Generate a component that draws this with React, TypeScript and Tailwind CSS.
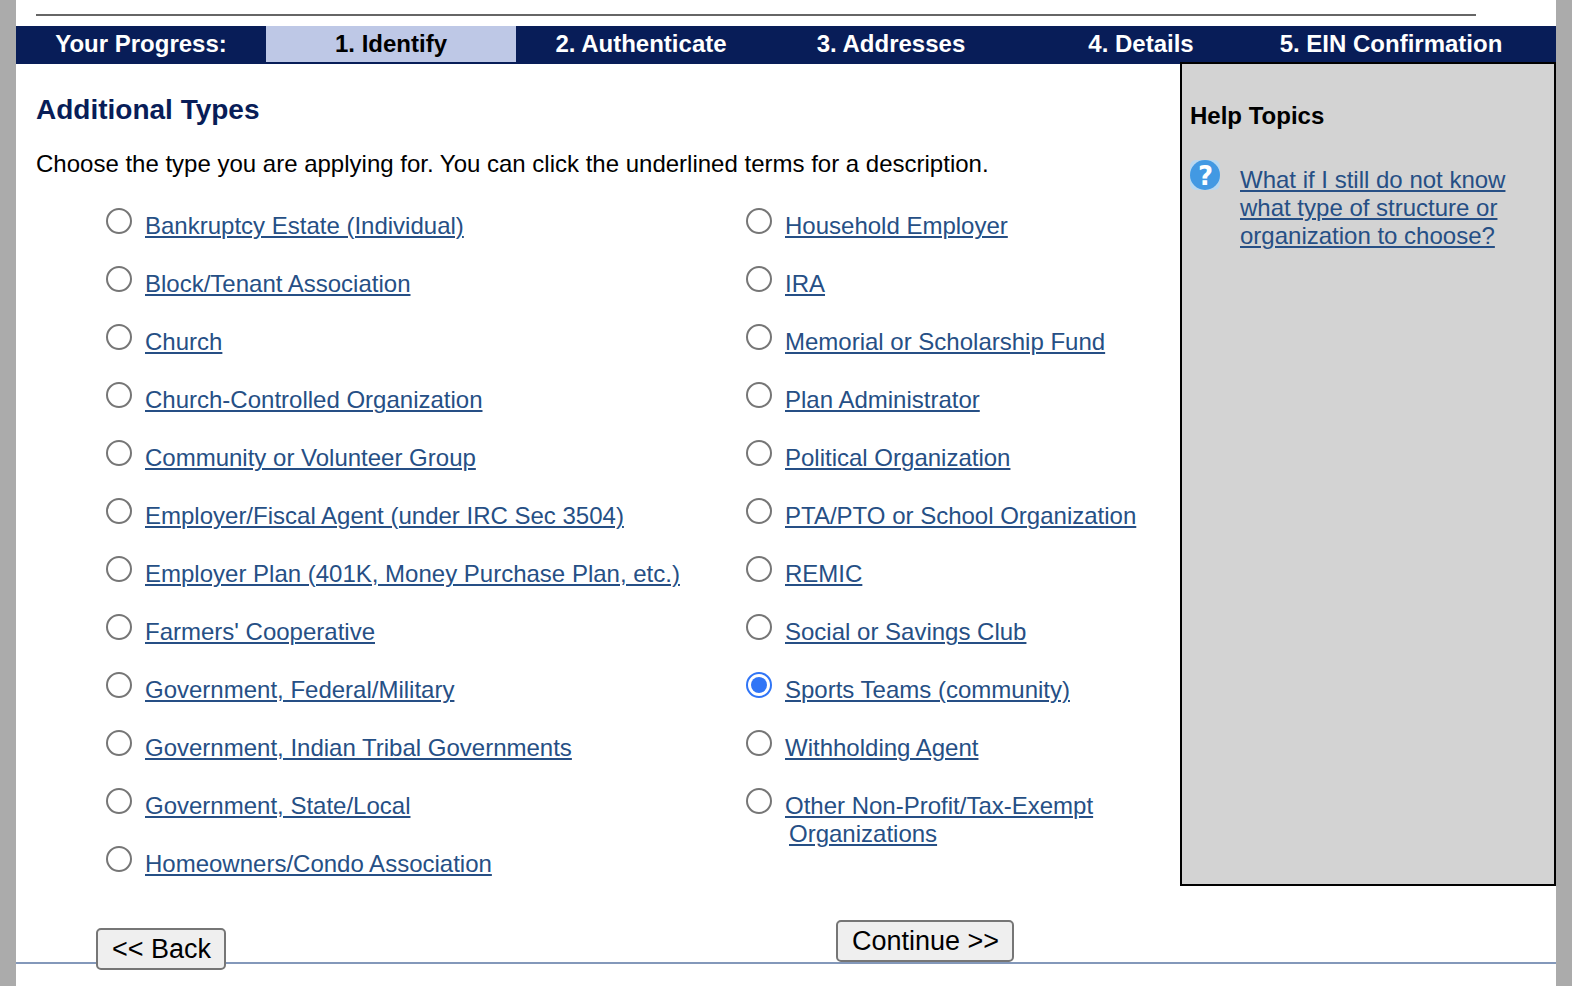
import { useState } from 'react';

const STEPS = ['1. Identify', '2. Authenticate', '3. Addresses', '4. Details', '5. EIN Confirmation'];

type TypeOption = { id: string; label: string; more?: string };

const LEFT_TYPES: TypeOption[] = [
  { id: 'bankruptcy', label: 'Bankruptcy Estate (Individual)' },
  { id: 'block-tenant', label: 'Block/Tenant Association' },
  { id: 'church', label: 'Church' },
  { id: 'church-controlled', label: 'Church-Controlled Organization' },
  { id: 'community', label: 'Community or Volunteer Group' },
  { id: 'fiscal-agent', label: 'Employer/Fiscal Agent (under IRC Sec 3504)' },
  { id: 'employer-plan', label: 'Employer Plan (401K, Money Purchase Plan, etc.)' },
  { id: 'farmers', label: "Farmers' Cooperative" },
  { id: 'gov-federal', label: 'Government, Federal/Military' },
  { id: 'gov-tribal', label: 'Government, Indian Tribal Governments' },
  { id: 'gov-state', label: 'Government, State/Local' },
  { id: 'homeowners', label: 'Homeowners/Condo Association' },
];

const RIGHT_TYPES: TypeOption[] = [
  { id: 'household', label: 'Household Employer' },
  { id: 'ira', label: 'IRA' },
  { id: 'memorial', label: 'Memorial or Scholarship Fund' },
  { id: 'plan-admin', label: 'Plan Administrator' },
  { id: 'political', label: 'Political Organization' },
  { id: 'pta', label: 'PTA/PTO or School Organization' },
  { id: 'remic', label: 'REMIC' },
  { id: 'social', label: 'Social or Savings Club' },
  { id: 'sports', label: 'Sports Teams (community)' },
  { id: 'withholding', label: 'Withholding Agent' },
  { id: 'other', label: 'Other Non-Profit/Tax-Exempt', more: 'Organizations' },
];

const LINK = 'text-[#264f85] underline decoration-2 underline-offset-2';
const BUTTON = 'h-[42px] pl-3.5 pr-[13px] rounded-[5px] border-2 border-[#767676] bg-[#efefef] text-[27px] leading-8 text-black';

function HelpIcon() {
  return (
    <svg className="w-[30px] h-[30px] shrink-0" viewBox="0 0 30 30" aria-hidden="true">
      <rect width="30" height="30" rx="6" fill="#b9d8f0" />
      <circle cx="15" cy="15" r="15" fill="#4299e3" />
      <text x="15.5" y="25" textAnchor="middle" fontFamily="DejaVu Sans, sans-serif" fontSize="26" fontWeight="bold" fill="#ffffff">?</text>
    </svg>
  );
}

export default function App() {
  const [selected, setSelected] = useState('sports');

  const renderColumn = (types: TypeOption[]) => (
    <ul className="flex flex-col gap-[26px]">
      {types.map((t) => (
        <li key={t.id} className="flex items-start gap-[13px] min-h-8">
          <input
            type="radio"
            id={t.id}
            name="entityType"
            checked={selected === t.id}
            onChange={() => setSelected(t.id)}
            className="appearance-none shrink-0 w-[26px] h-[26px] rounded-full border-2 border-[#767676] bg-white p-[3px] bg-clip-content checked:border-[#3075f6] checked:bg-[#3075f6]"
          />
          <label htmlFor={t.id} className="pt-1">
            <a href="#" className={LINK}>
              {t.label}
              {t.more && <span className="block pl-1">{t.more}</span>}
            </a>
          </label>
        </li>
      ))}
    </ul>
  );

  return (
    <div className="min-h-screen bg-[#ababab] px-4 font-['Liberation_Sans',Arial,sans-serif] text-2xl leading-7 text-black">
      <div className="min-h-screen bg-white pt-3.5">
        <hr className="ml-5 mr-20 border-t-2 border-[#666666]" />

        {/* Progress bar */}
        <nav className="mt-2.5 bg-[#081d58] pr-10 pb-0.5 font-bold text-white">
          <ol className="grid grid-cols-6 text-center">
            <li className="h-9 leading-9">Your Progress:</li>
            {STEPS.map((s, i) => (
              <li key={s} className={i === 0 ? 'h-9 leading-9 bg-[#bec8e6] text-black' : 'h-9 leading-9'}>
                {s}
              </li>
            ))}
          </ol>
        </nav>

        <div className="flex">
          <main className="flex-1 pl-5 pb-2">
            <h1 className="mt-[30px] text-[28px] leading-8 font-bold text-[#081d58]">Additional Types</h1>
            <p className="mt-6">Choose the type you are applying for. You can click the underlined terms for a description.</p>
            <div className="mt-[30px] pl-[70px] grid grid-cols-[640px_1fr]">
              {renderColumn(LEFT_TYPES)}
              {renderColumn(RIGHT_TYPES)}
            </div>
          </main>

          {/* Help panel, its top border sits on the bar's bottom edge */}
          <aside className="-mt-0.5 w-[376px] shrink-0 border-2 border-black bg-[#d3d3d3] px-2">
            <h2 className="mt-[38px] font-bold">Help Topics</h2>
            <div className="mt-[30px] flex items-start gap-5">
              <HelpIcon />
              <a href="#" className={`mt-1.5 ${LINK}`}>What if I still do not know what type of structure or organization to choose?</a>
            </div>
          </aside>
        </div>

        {/* Back hangs over the rule below */}
        <div className="grid grid-cols-[740px_1fr] items-start justify-items-start border-b-2 border-[#8398ba] pt-[34px] pl-20">
          <button type="button" className={`mt-2 -mb-2 ${BUTTON}`}>&lt;&lt; Back</button>
          <button type="button" className={BUTTON}>Continue &gt;&gt;</button>
        </div>
      </div>
    </div>
  );
}
